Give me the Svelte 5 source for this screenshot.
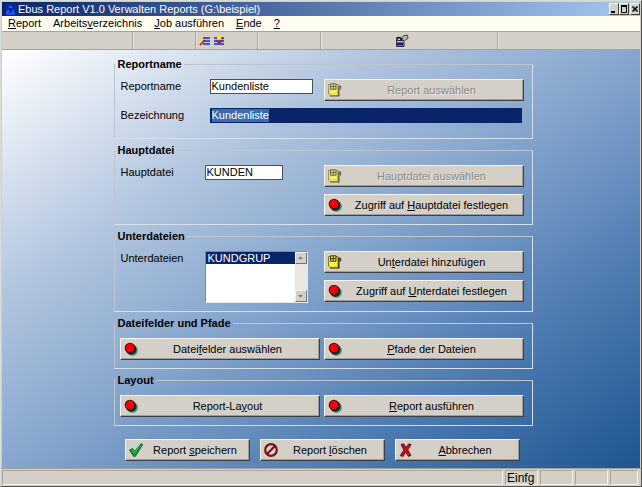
<script lang="ts">
  import { onMount } from 'svelte'

  let reportName = $state('Kundenliste')
  let description = $state('Kundenliste')
  let mainFile = $state('KUNDEN')
  let subFiles = $state(['KUNDGRUP'])
  let selected = $state('KUNDGRUP')
  let descInput: HTMLInputElement

  // [before, access key, after]
  const menu = [
    ['', 'R', 'eport'],
    ['Arbeits', 'v', 'erzeichnis'],
    ['', 'J', 'ob ausführen'],
    ['', 'E', 'nde'],
    ['', '?', ''],
  ]

  onMount(() => {
    descInput.focus()
    descInput.select()
  })
</script>

{#snippet dot()}
  <svg class="icon" viewBox="0 0 14 14" aria-hidden="true">
    <circle cx="8.4" cy="8.4" r="5.5" fill="#4aa58e" />
    <circle cx="7.3" cy="7.4" r="5.3" fill="#17302c" />
    <circle cx="6" cy="6" r="5.3" fill="#3c0a0a" />
    <circle cx="6" cy="6" r="4.4" fill="#f4000c" />
  </svg>
{/snippet}

{#snippet pick(faded: boolean)}
  <svg class="icon" class:faded viewBox="0 0 14 14" aria-hidden="true">
    <path d="M2 3h9.500v10.500H2z" fill="#2a2808" />
    <path d="M.5 1.500h9.500v11H2L.5 11z" fill="#f6ee1c" stroke="#6a640c" stroke-width=".8" />
    <path d="M2.500.8h5.500v5.400H2.500z" fill="#e4dc6c" stroke="#2e2a06" stroke-width=".9" />
    <path d="M2.500 3.500H8M5.300 1v5" stroke="#2e2a06" stroke-width=".8" />
    <path d="M3 8.500h5" stroke="#fffde0" stroke-width="1.500" />
    <path d="M10.500 2.500l2 1v3M10.500 5h1" fill="none" stroke="#4a3c28" stroke-width="1.300" />
  </svg>
{/snippet}

{#snippet check()}
  <svg class="icon" viewBox="0 0 14 14" aria-hidden="true">
    <path d="M.5 7L3.600 5.400l2 3L12 .8l1.800.7L6.400 13.400H4.600z" fill="#06952c" stroke="#0a5c20" stroke-width=".8" />
    <path d="M3 6.800l2.300 3.400L12 2" fill="none" stroke="#28cf55" />
  </svg>
{/snippet}

{#snippet forbid()}
  <svg class="icon" viewBox="0 0 14 14" aria-hidden="true">
    <circle cx="7" cy="7" r="5.800" fill="none" stroke="#7c1014" stroke-width="2.200" />
    <path d="M11 3L3 11" stroke="#7c1014" stroke-width="2.200" />
  </svg>
{/snippet}

{#snippet cross()}
  <svg class="icon" viewBox="0 0 14 14" aria-hidden="true">
    <path d="M2 1.500L4.800.8 7 4.600 9.800.8l2.400.8L8.800 6.800l3.200 5.600-2.600 1L6.600 9l-2.400 4.400-3-.8L4.800 7z" fill="#b8141a" stroke="#5a0a0c" stroke-width=".8" />
  </svg>
{/snippet}

<div class="window">
  <header class="title">
    <svg class="app-icon" viewBox="0 0 11 11" aria-hidden="true">
      <path d="M0 0h11v11H0z" fill="#0524a8" />
      <path d="M5.500 1L8 4H3zM1 9l2-4 2 4zM6 9l2-4 2 4z" fill="#1c5cff" />
      <path d="M1 10h9" stroke="#3c7cff" />
    </svg>
    <h1>Ebus Report V1.0 Verwalten Reports (G:\beispiel)</h1>
    <button class="win-btn" aria-label="Minimieren">
      <svg viewBox="0 0 8 10"><path d="M1 8h4" stroke="#000" stroke-width="2" /></svg>
    </button>
    <button class="win-btn" aria-label="Maximieren">
      <svg viewBox="0 0 8 10"><path d="M1.500 2v6.500h5V2" fill="none" stroke="#000" /><path d="M1 2h6" stroke="#000" stroke-width="2" /></svg>
    </button>
    <button class="win-btn close" aria-label="Schließen">
      <svg viewBox="0 0 8 10"><path d="M1.500 2.500l5 5M6.500 2.500l-5 5" stroke="#000" stroke-width="1.600" /></svg>
    </button>
  </header>

  <nav class="menu">
    {#each menu as [pre, key, post]}
      <button>{pre}<u>{key}</u>{post}</button>
    {/each}
  </nav>

  <div class="toolbar">
    <div class="tool w131"></div>
    <div class="tool w63"></div>
    <div class="tool w62 icons">
      <button aria-label="Einfügen">
        <svg viewBox="0 0 12 12">
          <path d="M1 2h4v3H1zM1 8h3v2H1z" fill="#f4e81c" />
          <path d="M4 3h7M4 6h7M4 9h7" stroke="#2228c8" stroke-width="1.500" />
          <path d="M4 4.500h7M4 7.500h7" stroke="#b8c4f4" />
          <path d="M1 10l5-5" stroke="#a0202c" stroke-width="1.600" />
        </svg>
      </button>
      <button aria-label="Entfernen">
        <svg viewBox="0 0 12 12">
          <path d="M1 3h10M1 6h10M1 9h10" stroke="#2228c8" stroke-width="1.500" />
          <path d="M1 4.500h10M1 7.500h10" stroke="#b8c4f4" />
          <path d="M4 1h4v3H4z" fill="#f4e81c" />
          <path d="M3 5l3 3 4-3" fill="none" stroke="#a0202c" stroke-width="1.600" />
        </svg>
      </button>
    </div>
    <div class="tool w63"></div>
    <div class="tool w177 center">
      <button aria-label="Drucken">
        <svg class="wide" viewBox="0 0 14 14">
          <path d="M1.500 6.500h7.500v6H1.500z" fill="#b8b8d8" stroke="#333" />
          <path d="M2 8.500h6.500v3H2z" fill="#181888" />
          <path d="M2 6.500V4l3-.500 1 2 4-2" fill="none" stroke="#111" stroke-width="1.500" />
          <path d="M6.500 3.500l2.500-2 3.500-.3.500 3-3 2.300" fill="#b4b4b4" stroke="#444" />
        </svg>
      </button>
    </div>
    <div class="tool rest"></div>
  </div>

  <main>
    <form class="form" onsubmit={(e) => e.preventDefault()}>
      <fieldset>
        <legend>Reportname</legend>
        <div class="grid">
          <div class="field wide-label">
            <label for="name">Reportname</label>
            <input id="name" class="name" bind:value={reportName} />
          </div>
          <button class="btn" type="button" disabled>{@render pick(true)}<span>Report auswählen</span></button>
          <div class="field wide-label full">
            <label for="desc">Bezeichnung</label>
            <input id="desc" class="desc" bind:value={description} bind:this={descInput} />
          </div>
        </div>
      </fieldset>

      <fieldset>
        <legend>Hauptdatei</legend>
        <div class="grid">
          <div class="field">
            <label for="main">Hauptdatei</label>
            <input id="main" class="main-file" bind:value={mainFile} />
          </div>
          <div class="stack">
            <button class="btn" type="button" disabled>{@render pick(true)}<span>Hauptdatei auswählen</span></button>
            <button class="btn" type="button">{@render dot()}<span>Zugriff auf <u>H</u>auptdatei festlegen</span></button>
          </div>
        </div>
      </fieldset>

      <fieldset>
        <legend>Unterdateien</legend>
        <div class="grid">
          <div class="field">
            <label for="subs">Unterdateien</label>
            <div class="listbox">
              <select id="subs" size="4" bind:value={selected}>
                {#each subFiles as file}
                  <option value={file}>{file}</option>
                {/each}
              </select>
              <div class="scroll">
                <button type="button" aria-label="Nach oben"><svg viewBox="0 0 10 10"><path d="M2 6h5L4.500 3.500z" fill="#777" /></svg></button>
                <button type="button" aria-label="Nach unten"><svg viewBox="0 0 10 10"><path d="M2 4h5L4.500 6.500z" fill="#777" /></svg></button>
              </div>
            </div>
          </div>
          <div class="stack">
            <button class="btn" type="button">{@render pick(false)}<span>Un<u>t</u>erdatei hinzufügen</span></button>
            <button class="btn" type="button">{@render dot()}<span>Zugriff auf <u>U</u>nterdatei festlegen</span></button>
          </div>
        </div>
      </fieldset>

      <fieldset>
        <legend>Dateifelder und Pfade</legend>
        <div class="grid">
          <button class="btn" type="button">{@render dot()}<span>Datei<u>f</u>elder auswählen</span></button>
          <button class="btn" type="button">{@render dot()}<span><u>P</u>fade der Dateien</span></button>
        </div>
      </fieldset>

      <fieldset>
        <legend>Layout</legend>
        <div class="grid">
          <button class="btn" type="button">{@render dot()}<span>Report-La<u>y</u>out</span></button>
          <button class="btn" type="button">{@render dot()}<span><u>R</u>eport ausführen</span></button>
        </div>
      </fieldset>

      <div class="actions">
        <button class="btn" type="submit">{@render check()}<span>Report <u>s</u>peichern</span></button>
        <button class="btn" type="button">{@render forbid()}<span>Report <u>l</u>öschen</span></button>
        <button class="btn" type="button">{@render cross()}<span><u>A</u>bbrechen</span></button>
      </div>
    </form>
  </main>

  <footer>
    <div class="pane message"></div>
    <div class="pane mode">Einfg</div>
    <div class="pane"></div>
    <div class="pane"></div>
    <div class="pane last"></div>
  </footer>
</div>

<style>
  :global(body) {
    background: #d4d0c8;
  }

  .window {
    min-height: 100vh;
    box-sizing: border-box;
    display: flex;
    flex-direction: column;
    padding-top: 1px;
    border: 1px solid #d8dcd6;
    border-right-color: #55534f;
    border-bottom-color: #55534f;
    background: #d4d0c8;
    font: 11px/15px 'Liberation Sans', Arial, sans-serif;
    color: #000;
  }

  button,
  input,
  select {
    font: inherit;
    color: inherit;
    margin: 0;
    padding: 0;
    box-sizing: border-box;
  }

  svg {
    display: block;
  }

  .title {
    display: flex;
    align-items: center;
    height: 14px;
    margin: 0 1px;
    padding-left: 3px;
    background: linear-gradient(to right, #0a246a, #a6caf0);
    color: #fff;
  }

  .app-icon {
    width: 11px;
    height: 11px;
  }

  h1 {
    flex: 1;
    margin: 0 0 0 2px;
    font-size: 11px;
    line-height: 14px;
    font-weight: 400;
    white-space: nowrap;
  }

  .win-btn {
    width: 10px;
    height: 12px;
    background: #d4d0c8;
    border: 1px solid #fff;
    border-right-color: #404040;
    border-bottom-color: #404040;
  }

  .win-btn svg {
    width: 8px;
    height: 10px;
  }

  .win-btn.close {
    margin-left: 1px;
  }

  .menu {
    display: flex;
    gap: 12px;
    height: 15px;
    margin: 0 1px;
    padding-left: 6px;
    background: #fffcf0;
    border-bottom: 1px solid #a5a29b;
  }

  .menu button,
  .tool button {
    background: none;
    border: none;
  }

  .toolbar {
    display: flex;
    height: 17px;
    margin: 0 1px;
    border-bottom: 1px solid #a5a29b;
  }

  .tool {
    display: flex;
    align-items: center;
    box-sizing: border-box;
    border-right: 1px solid #aaa69e;
    box-shadow: 1px 0 #e6e3dc;
  }

  .w62 { width: 62px; }
  .w63 { width: 63px; }
  .w131 { width: 131px; }
  .w177 { width: 177px; }

  .icons {
    gap: 2px;
    padding-left: 3px;
  }

  .center {
    justify-content: center;
    padding-right: 14px;
  }

  .tool svg {
    width: 12px;
    height: 12px;
  }

  .tool svg.wide {
    width: 14px;
    height: 14px;
  }

  .rest {
    flex: 1;
    border: none;
    box-shadow: none;
  }

  main {
    flex: 1;
    margin: 0 1px;
    padding: 8px 0 5px 4px;
    background: linear-gradient(to bottom right, #fff 0%, #b0c4de 30%, #86a6cd 50%, #4f7cb2 75%, #1f5592 100%);
  }

  .form {
    width: 419px;
    margin: 0 auto;
  }

  fieldset {
    min-width: 0;
    margin: 0 0 5px;
    padding: 0;
    border: 1px solid #bcc6d2;
    border-right-color: #d4e0ee;
    border-bottom-color: #d4e0ee;
  }

  legend {
    padding: 0 2px 0 3px;
    font-weight: 700;
    line-height: 12px;
  }

  .grid {
    display: grid;
    grid-template-columns: 1fr 1fr;
    gap: 7px 4px;
    padding: 9px 8px 8px 5px;
  }

  .field {
    display: grid;
    grid-template-columns: 85px 1fr;
    align-items: start;
    justify-items: start;
  }

  .wide-label {
    grid-template-columns: 90px 1fr;
  }

  .full {
    grid-column: 1 / -1;
    min-height: 22px;
  }

  label {
    padding-left: 1px;
  }

  input {
    height: 15px;
    padding-left: 1px;
    border: 1px solid #4a5058;
    border-radius: 0;
    background: #fff;
    outline: none;
  }

  .name {
    width: 103px;
  }

  .main-file {
    width: 78px;
  }

  .desc {
    width: 312px;
    background: #0a246a;
    border-color: #0a246a;
    color: #fff;
  }

  .desc::selection {
    background: #3a6ab0;
    color: #fff;
  }

  .listbox {
    display: flex;
    width: 103px;
    height: 52px;
    box-sizing: border-box;
    border: 1px solid #808890;
    border-right-color: #e8e8e8;
    border-bottom-color: #e8e8e8;
    background: #fff;
  }

  select {
    flex: 1;
    min-width: 0;
    height: 50px;
    border: none;
    border-radius: 0;
    outline: none;
    background: #fff;
    overflow: hidden;
    scrollbar-width: none;
  }

  option {
    min-height: 0;
    padding: 0 2px;
    line-height: 12px;
  }

  option:checked {
    background: #0a246a linear-gradient(#0a246a, #0a246a);
    color: #fff;
  }

  .scroll {
    display: flex;
    flex-direction: column;
    justify-content: space-between;
    width: 12px;
    background: #e9e7e2;
  }

  .scroll button {
    height: 12px;
    border: 1px solid #f4f2ee;
    border-right-color: #77746e;
    border-bottom-color: #77746e;
    background: #d4d0c8;
  }

  .scroll svg {
    width: 10px;
    height: 10px;
  }

  .stack {
    display: grid;
    align-content: start;
    gap: 7px;
  }

  .btn {
    display: flex;
    align-items: center;
    width: 100%;
    height: 22px;
    padding-left: 2px;
    border: 1px solid #f6f4f0;
    border-right-color: #3c4048;
    border-bottom-color: #3c4048;
    box-shadow: inset -1px -1px #a09d96;
    background: #d4d0c8;
  }

  .btn span {
    flex: 1;
    text-align: center;
    white-space: nowrap;
  }

  .btn:disabled {
    color: #8c8a86;
    text-shadow: 1px 1px #e6e3dd;
  }

  .icon {
    width: 14px;
    height: 14px;
    margin-left: 1px;
    margin-right: -1px;
  }

  .faded {
    opacity: 0.7;
  }

  .actions {
    display: grid;
    grid-template-columns: repeat(3, 1fr);
    gap: 10px;
    padding: 8px 13px 0 11px;
  }

  footer {
    display: flex;
    gap: 2px;
    height: 18px;
    padding: 1px 3px 1px 1px;
    border-top: 1px solid #a5a29b;
    box-sizing: border-box;
  }

  .pane {
    width: 33px;
    box-sizing: border-box;
    border: 1px solid #aaa69e;
    border-right-color: #f4f2ee;
    border-bottom-color: #f4f2ee;
  }

  .message {
    flex: 1;
  }

  .mode {
    font-size: 12px;
    line-height: 14px;
    padding-left: 1px;
  }

  .last {
    width: 28px;
  }
</style>
